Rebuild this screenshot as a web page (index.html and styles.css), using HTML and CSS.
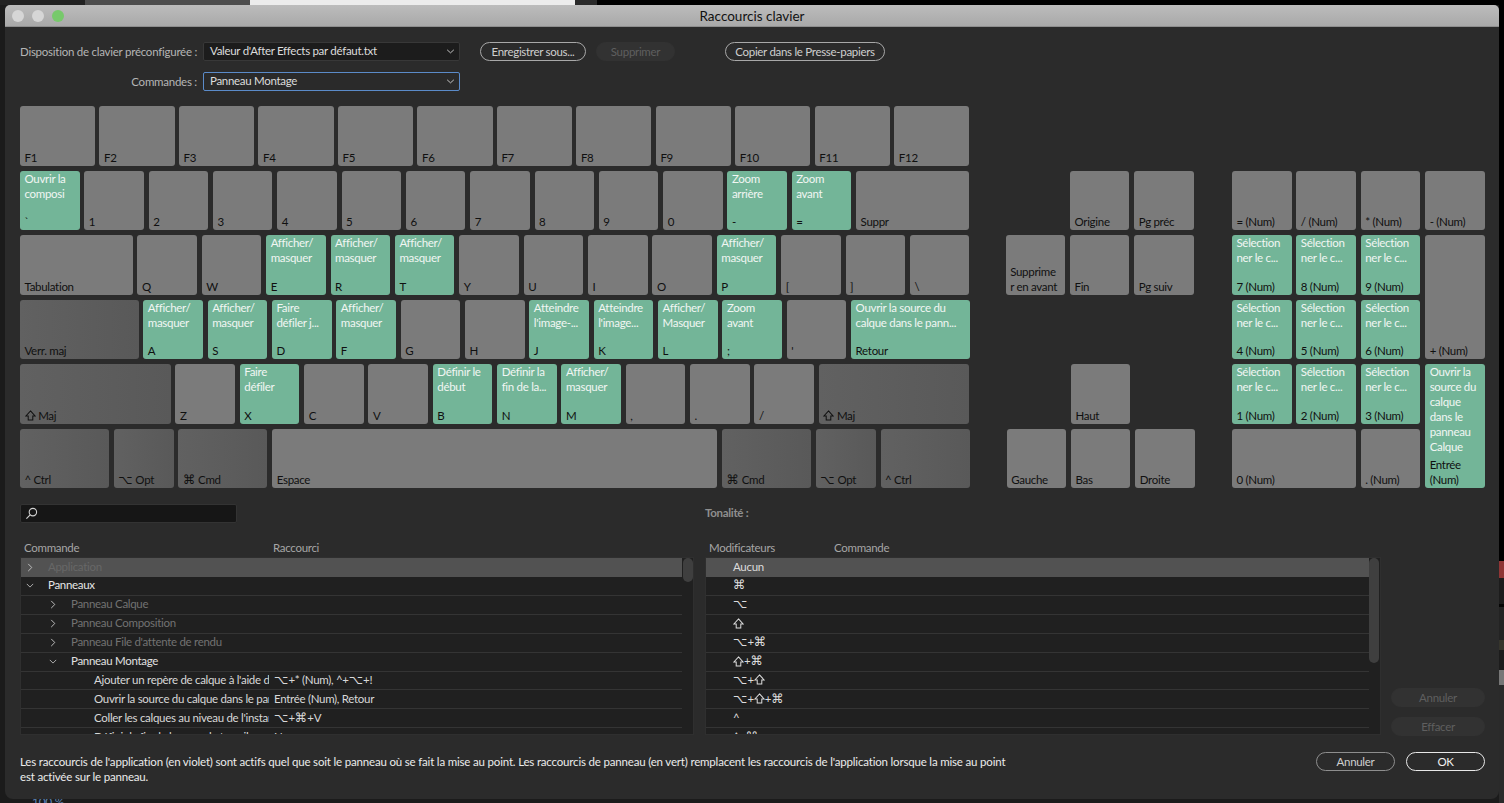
FILE: index.html
```html
<!DOCTYPE html>
<html lang="fr">
<head>
    <meta charset="UTF-8">
    <meta name="viewport" content="width=device-width, initial-scale=1.0">
    <title>Raccourcis clavier</title>
    <link rel="stylesheet" href="styles.css">
</head>
<body>
    <!-- What shows around the dialog -->
    <div class="backdrop">
        <div class="bg-top"></div>
        <div class="bg-right"></div>
        <div class="bg-percent">100 %</div>
    </div>

    <div class="dialog">
        <div class="titlebar">
            <div class="lights">
                <span class="light"></span>
                <span class="light"></span>
                <span class="light green"></span>
            </div>
            <div class="title">Raccourcis clavier</div>
        </div>

        <!-- Presets -->
        <div class="form">
            <div class="form-row">
                <label class="form-label">Disposition de clavier préconfigurée :</label>
                <div class="select">Valeur d'After Effects par défaut.txt
                    <svg class="chevron" viewBox="0 0 10 6"><path d="M1 1l4 3.6L9 1"/></svg>
                </div>
                <button class="btn btn-save">Enregistrer sous...</button>
                <button class="btn btn-off btn-delete">Supprimer</button>
                <button class="btn btn-copy">Copier dans le Presse-papiers</button>
            </div>
            <div class="form-row">
                <label class="form-label">Commandes :</label>
                <div class="select focus">Panneau Montage
                    <svg class="chevron" viewBox="0 0 10 6"><path d="M1 1l4 3.6L9 1"/></svg>
                </div>
            </div>
        </div>

        <!-- Keyboard -->
        <div class="keyboard">
            <div class="main-keys">
                <div class="key-row fn-row">
                    <div class="key"><span></span><span>F1</span></div>
                    <div class="key"><span></span><span>F2</span></div>
                    <div class="key"><span></span><span>F3</span></div>
                    <div class="key"><span></span><span>F4</span></div>
                    <div class="key"><span></span><span>F5</span></div>
                    <div class="key"><span></span><span>F6</span></div>
                    <div class="key"><span></span><span>F7</span></div>
                    <div class="key"><span></span><span>F8</span></div>
                    <div class="key"><span></span><span>F9</span></div>
                    <div class="key"><span></span><span>F10</span></div>
                    <div class="key"><span></span><span>F11</span></div>
                    <div class="key"><span></span><span>F12</span></div>
                </div>
                <div class="key-row">
                    <div class="key on"><span>Ouvrir la<br>composi</span><span>`</span></div>
                    <div class="key"><span></span><span>1</span></div>
                    <div class="key"><span></span><span>2</span></div>
                    <div class="key"><span></span><span>3</span></div>
                    <div class="key"><span></span><span>4</span></div>
                    <div class="key"><span></span><span>5</span></div>
                    <div class="key"><span></span><span>6</span></div>
                    <div class="key"><span></span><span>7</span></div>
                    <div class="key"><span></span><span>8</span></div>
                    <div class="key"><span></span><span>9</span></div>
                    <div class="key"><span></span><span>0</span></div>
                    <div class="key on"><span>Zoom<br>arrière</span><span>-</span></div>
                    <div class="key on"><span>Zoom<br>avant</span><span>=</span></div>
                    <div class="key w-suppr"><span></span><span>Suppr</span></div>
                </div>
                <div class="key-row">
                    <div class="key w-tab"><span></span><span>Tabulation</span></div>
                    <div class="key"><span></span><span>Q</span></div>
                    <div class="key"><span></span><span>W</span></div>
                    <div class="key on"><span>Afficher/<br>masquer</span><span>E</span></div>
                    <div class="key on"><span>Afficher/<br>masquer</span><span>R</span></div>
                    <div class="key on"><span>Afficher/<br>masquer</span><span>T</span></div>
                    <div class="key"><span></span><span>Y</span></div>
                    <div class="key"><span></span><span>U</span></div>
                    <div class="key"><span></span><span>I</span></div>
                    <div class="key"><span></span><span>O</span></div>
                    <div class="key on"><span>Afficher/<br>masquer</span><span>P</span></div>
                    <div class="key"><span></span><span>[</span></div>
                    <div class="key"><span></span><span>]</span></div>
                    <div class="key"><span></span><span>\</span></div>
                </div>
                <div class="key-row">
                    <div class="key mod w-caps"><span></span><span>Verr. maj</span></div>
                    <div class="key on"><span>Afficher/<br>masquer</span><span>A</span></div>
                    <div class="key on"><span>Afficher/<br>masquer</span><span>S</span></div>
                    <div class="key on"><span>Faire<br>défiler j...</span><span>D</span></div>
                    <div class="key on"><span>Afficher/<br>masquer</span><span>F</span></div>
                    <div class="key"><span></span><span>G</span></div>
                    <div class="key"><span></span><span>H</span></div>
                    <div class="key on"><span>Atteindre<br>l'image-...</span><span>J</span></div>
                    <div class="key on"><span>Atteindre<br>l'image...</span><span>K</span></div>
                    <div class="key on"><span>Afficher/<br>Masquer</span><span>L</span></div>
                    <div class="key on"><span>Zoom<br>avant</span><span>;</span></div>
                    <div class="key"><span></span><span>'</span></div>
                    <div class="key on w-caps"><span>Ouvrir la source du<br>calque dans le pann...</span><span>Retour</span></div>
                </div>
                <div class="key-row">
                    <div class="key mod w-shift"><span></span><span><svg class="shift" viewBox="0 0 12 12"><path d="M6 1l5 5.500H8.500V11h-5V6.500H1z"/></svg> Maj</span></div>
                    <div class="key"><span></span><span>Z</span></div>
                    <div class="key on"><span>Faire<br>défiler</span><span>X</span></div>
                    <div class="key"><span></span><span>C</span></div>
                    <div class="key"><span></span><span>V</span></div>
                    <div class="key on"><span>Définir le<br>début</span><span>B</span></div>
                    <div class="key on"><span>Définir la<br>fin de la...</span><span>N</span></div>
                    <div class="key on"><span>Afficher/<br>masquer</span><span>M</span></div>
                    <div class="key"><span></span><span>,</span></div>
                    <div class="key"><span></span><span>.</span></div>
                    <div class="key"><span></span><span>/</span></div>
                    <div class="key mod w-shift"><span></span><span><svg class="shift" viewBox="0 0 12 12"><path d="M6 1l5 5.500H8.500V11h-5V6.500H1z"/></svg> Maj</span></div>
                </div>
                <div class="key-row">
                    <div class="key mod w-ctrl"><span></span><span>^ Ctrl</span></div>
                    <div class="key mod"><span></span><span><i class="sym">⌥</i> Opt</span></div>
                    <div class="key mod w-ctrl"><span></span><span><i class="sym">⌘</i> Cmd</span></div>
                    <div class="key w-space"><span></span><span>Espace</span></div>
                    <div class="key mod w-ctrl"><span></span><span><i class="sym">⌘</i> Cmd</span></div>
                    <div class="key mod"><span></span><span><i class="sym">⌥</i> Opt</span></div>
                    <div class="key mod w-ctrl"><span></span><span>^ Ctrl</span></div>
                </div>
            </div>

            <div class="nav-keys">
                <div class="key col-2"><span></span><span>Origine</span></div>
                <div class="key"><span></span><span>Pg préc</span></div>
                <div class="key"><span></span><span>Supprime<br>r en avant</span></div>
                <div class="key"><span></span><span>Fin</span></div>
                <div class="key"><span></span><span>Pg suiv</span></div>
                <div class="key arrow arrow-up"><span></span><span>Haut</span></div>
                <div class="key arrow arrow-low"><span></span><span>Gauche</span></div>
                <div class="key arrow arrow-low"><span></span><span>Bas</span></div>
                <div class="key arrow arrow-low"><span></span><span>Droite</span></div>
            </div>

            <div class="num-keys">
                <div class="key"><span></span><span>= (Num)</span></div>
                <div class="key"><span></span><span>/ (Num)</span></div>
                <div class="key"><span></span><span>* (Num)</span></div>
                <div class="key"><span></span><span>- (Num)</span></div>
                <div class="key on"><span>Sélection<br>ner le c...</span><span>7 (Num)</span></div>
                <div class="key on"><span>Sélection<br>ner le c...</span><span>8 (Num)</span></div>
                <div class="key on"><span>Sélection<br>ner le c...</span><span>9 (Num)</span></div>
                <div class="key tall"><span></span><span>+ (Num)</span></div>
                <div class="key on"><span>Sélection<br>ner le c...</span><span>4 (Num)</span></div>
                <div class="key on"><span>Sélection<br>ner le c...</span><span>5 (Num)</span></div>
                <div class="key on"><span>Sélection<br>ner le c...</span><span>6 (Num)</span></div>
                <div class="key on"><span>Sélection<br>ner le c...</span><span>1 (Num)</span></div>
                <div class="key on"><span>Sélection<br>ner le c...</span><span>2 (Num)</span></div>
                <div class="key on"><span>Sélection<br>ner le c...</span><span>3 (Num)</span></div>
                <div class="key on tall"><span>Ouvrir la<br>source du<br>calque<br>dans le<br>panneau<br>Calque</span><span>Entrée<br>(Num)</span></div>
                <div class="key wide"><span></span><span>0 (Num)</span></div>
                <div class="key"><span></span><span>. (Num)</span></div>
            </div>
        </div>

        <!-- Lists -->
        <div class="lower">
            <div class="pane pane-left">
                <div class="pane-top">
                    <div class="search">
                        <svg class="search-icon" viewBox="0 0 14 14"><circle cx="8.5" cy="5.5" r="4"/><path d="M5.600 8.400L1.500 12.500"/></svg>
                    </div>
                </div>
                <div class="list-head">
                    <div class="head-cell head-command">Commande</div>
                    <div class="head-cell">Raccourci</div>
                </div>
                <div class="list">
                    <div class="thumb thumb-left"></div>
                    <div class="row selected">
                        <div class="cell-name lvl-0 dim"><svg class="twisty" viewBox="0 0 8 10"><path d="M2 1l4 4-4 4"/></svg>Application</div>
                    </div>
                    <div class="row">
                        <div class="cell-name lvl-0"><svg class="twisty" viewBox="0 0 10 8"><path d="M1 2l4 4 4-4"/></svg>Panneaux</div>
                    </div>
                    <div class="row">
                        <div class="cell-name lvl-1 grey"><svg class="twisty" viewBox="0 0 8 10"><path d="M2 1l4 4-4 4"/></svg>Panneau Calque</div>
                    </div>
                    <div class="row">
                        <div class="cell-name lvl-1 grey"><svg class="twisty" viewBox="0 0 8 10"><path d="M2 1l4 4-4 4"/></svg>Panneau Composition</div>
                    </div>
                    <div class="row">
                        <div class="cell-name lvl-1 grey"><svg class="twisty" viewBox="0 0 8 10"><path d="M2 1l4 4-4 4"/></svg>Panneau File d'attente de rendu</div>
                    </div>
                    <div class="row">
                        <div class="cell-name lvl-1"><svg class="twisty" viewBox="0 0 10 8"><path d="M1 2l4 4 4-4"/></svg>Panneau Montage</div>
                    </div>
                    <div class="row">
                        <div class="cell-name lvl-2">Ajouter un repère de calque à l'aide de la touche</div>
                        <div class="cell-keys"><i class="sym">⌥</i>+* (Num), ^+<i class="sym">⌥</i>+!</div>
                    </div>
                    <div class="row">
                        <div class="cell-name lvl-2">Ouvrir la source du calque dans le panneau Calque</div>
                        <div class="cell-keys">Entrée (Num), Retour</div>
                    </div>
                    <div class="row">
                        <div class="cell-name lvl-2">Coller les calques au niveau de l'instant courant</div>
                        <div class="cell-keys"><i class="sym">⌥</i>+<i class="sym">⌘</i>+V</div>
                    </div>
                    <div class="row">
                        <div class="cell-name lvl-2">Définir la fin de la zone de travail</div>
                        <div class="cell-keys">N</div>
                    </div>
                </div>
            </div>

            <div class="pane pane-right">
                <div class="pane-top">
                    <div class="tone">Tonalité :</div>
                </div>
                <div class="list-head">
                    <div class="head-cell head-mod">Modificateurs</div>
                    <div class="head-cell">Commande</div>
                </div>
                <div class="list">
                    <div class="thumb thumb-right"></div>
                    <div class="row selected"><div class="cell-mod">Aucun</div></div>
                    <div class="row"><div class="cell-mod"><i class="sym">⌘</i></div></div>
                    <div class="row"><div class="cell-mod"><i class="sym">⌥</i></div></div>
                    <div class="row"><div class="cell-mod"><svg class="shift" viewBox="0 0 12 12"><path d="M6 1l5 5.500H8.500V11h-5V6.500H1z"/></svg></div></div>
                    <div class="row"><div class="cell-mod"><i class="sym">⌥</i>+<i class="sym">⌘</i></div></div>
                    <div class="row"><div class="cell-mod"><svg class="shift" viewBox="0 0 12 12"><path d="M6 1l5 5.500H8.500V11h-5V6.500H1z"/></svg>+<i class="sym">⌘</i></div></div>
                    <div class="row"><div class="cell-mod"><i class="sym">⌥</i>+<svg class="shift" viewBox="0 0 12 12"><path d="M6 1l5 5.500H8.500V11h-5V6.500H1z"/></svg></div></div>
                    <div class="row"><div class="cell-mod"><i class="sym">⌥</i>+<svg class="shift" viewBox="0 0 12 12"><path d="M6 1l5 5.500H8.500V11h-5V6.500H1z"/></svg>+<i class="sym">⌘</i></div></div>
                    <div class="row"><div class="cell-mod">^</div></div>
                    <div class="row"><div class="cell-mod">^+<i class="sym">⌘</i></div></div>
                </div>
            </div>

            <div class="side-buttons">
                <button class="btn btn-off btn-side">Annuler</button>
                <button class="btn btn-off btn-side">Effacer</button>
            </div>
        </div>

        <!-- Footer -->
        <div class="footer">
            <p class="note">Les raccourcis de l'application (en violet) sont actifs quel que soit le panneau où se fait la mise au point. Les raccourcis de panneau (en vert) remplacent les raccourcis de l'application lorsque la mise au point<br>est activée sur le panneau.</p>
            <div class="footer-buttons">
                <button class="btn btn-cancel">Annuler</button>
                <button class="btn btn-ok">OK</button>
            </div>
        </div>
    </div>
</body>
</html>
```

FILE: styles.css
```css
* {
    box-sizing: border-box;
}
html, body {
    margin: 0;
    height: 100%;
}
body {
    position: relative;
    overflow: hidden;
    background-color: #1b1b1b;
    font-family: "Lato", "DejaVu Sans", sans-serif;
    font-size: 11.5px;
    letter-spacing: -0.3px;
    color: #d8d8d8;
}

/* behind the dialog */
.bg-top {
    position: absolute;
    left: 0;
    top: 0;
    width: 100%;
    height: 5px;
    background: linear-gradient(to right, #222 0, #222 85px, #4d4d4d 85px, #4d4d4d 250px, #ececec 250px, #ececec 575px, #2a2a2a 575px, #2a2a2a 597px, #000 597px);
}
.bg-right {
    position: absolute;
    right: 0;
    top: 5px;
    width: 5px;
    height: 798px;
    background: linear-gradient(to bottom, #000 0, #000 556px, #8f3535 556px, #8f3535 573px, #1c1c1c 573px, #1c1c1c 599px, #050505 599px, #050505 602px, #232323 602px, #232323 635px, #36352c 635px, #36352c 645px, #1c1c1c 645px, #1c1c1c 665px, #777 665px, #777 680px, #2a2a2a 680px);
}
.bg-percent {
    position: absolute;
    left: 32px;
    top: 794px;
    font-size: 12px;
    color: #5d86b8;
}

/* dialog */
.dialog {
    position: absolute;
    left: 5px;
    top: 5px;
    width: 1494px;
    height: 794px;
    padding-left: 15px;
    background-color: #2b2b2b;
    border-radius: 5px 5px 8px 8px;
    overflow: hidden;
}
.titlebar {
    position: relative;
    margin-left: -15px;
    height: 22px;
    background: linear-gradient(to bottom, #bcbcbc, #a9a9a9);
    border-bottom: 1px solid #8e8e8e;
    display: flex;
    align-items: center;
    justify-content: center;
}
.lights {
    position: absolute;
    left: 7px;
    top: 5px;
    display: flex;
    gap: 8px;
}
.light {
    width: 12px;
    height: 12px;
    border-radius: 50%;
    background-color: #d6d6d6;
}
.light.green {
    background-color: #77c96b;
}
.title {
    font-size: 13.5px;
    letter-spacing: 0;
    color: #111;
}

/* presets */
.form {
    padding-top: 15px;
    display: flex;
    flex-direction: column;
    gap: 11px;
}
.form-row {
    display: flex;
    align-items: center;
    height: 19px;
}
.form-label {
    width: 177px;
    margin-right: 6px;
    text-align: right;
    letter-spacing: -0.25px;
    color: #b5b5b5;
    white-space: nowrap;
}
.select {
    position: relative;
    width: 257px;
    height: 19px;
    line-height: 16px;
    padding-left: 6px;
    background-color: #1c1c1c;
    border: 1px solid #383838;
    border-radius: 2px;
    color: #dcdcdc;
}
.select.focus {
    background-color: #2a2a2a;
    border-color: #5b8bc9;
}
.chevron {
    position: absolute;
    right: 4px;
    top: 6px;
    width: 9px;
    height: 5px;
    fill: none;
    stroke: #cfcfcf;
    stroke-width: 1.1;
}
.btn {
    height: 19px;
    padding: 0;
    background: transparent;
    border: 1.5px solid #a8a8a8;
    border-radius: 10px;
    font-family: inherit;
    font-size: 11.5px;
    letter-spacing: inherit;
    color: #cfcfcf;
}
.btn-off {
    background-color: #323232;
    border-color: #323232;
    color: #5f5f5f;
}
.btn-save {
    width: 106px;
    margin-left: 20px;
}
.btn-delete {
    width: 79px;
    margin-left: 10px;
}
.btn-copy {
    width: 160px;
    margin-left: 50px;
}

/* keyboard */
.keyboard {
    margin-top: 15.4px;
    display: flex;
}
.main-keys {
    width: 949.5px;
    display: flex;
    flex-direction: column;
    gap: 4.85px;
}
.key-row {
    height: 59.6px;
    display: flex;
    gap: 4.8px;
}
.fn-row {
    gap: 4.4px;
}
.key {
    flex: 1 1 0;
    min-width: 0;
    overflow: hidden;
    display: flex;
    flex-direction: column;
    justify-content: space-between;
    padding: 0 5px 1px 4.5px;
    background-color: #7b7b7b;
    border-radius: 3px;
    line-height: 15px;
    white-space: nowrap;
    color: #101010;
}
.key.on {
    background-color: #73b598;
}
.key.on span:first-child {
    color: #f1f6f3;
}
.key.mod {
    background: linear-gradient(to right, #616161, #595959);
}
.sym {
    font-family: "DejaVu Sans", sans-serif;
    font-style: normal;
    font-size: 12.5px;
    letter-spacing: 0;
}
.shift {
    display: inline-block;
    width: 11px;
    height: 11px;
    vertical-align: -1.5px;
    fill: none;
    stroke: currentColor;
    stroke-width: 1.1;
}
.w-suppr {
    flex: 0 0 113.4px;
}
.w-tab {
    flex: 0 0 112.6px;
}
.w-caps {
    flex: 0 0 118.5px;
}
.w-shift {
    flex: 0 0 150.7px;
}
.w-ctrl {
    flex: 0 0 89px;
}
.w-space {
    flex: 0 0 445px;
}
.nav-keys, .num-keys {
    margin-top: 64.45px;
    display: grid;
    grid-template-columns: repeat(3, 59.5px);
    grid-template-rows: repeat(5, 59.6px);
    gap: 4.85px 4.8px;
}
.nav-keys {
    margin-left: 36.2px;
}
.col-2 {
    grid-column: 2;
}
.arrow {
    margin: 0 -1px 0 1px;
}
.arrow-up {
    grid-column: 2;
    grid-row: 4;
}
.arrow-low {
    grid-row: 5;
}
.num-keys {
    margin-left: 38.2px;
    grid-template-columns: repeat(4, 59.6px);
}
.tall {
    grid-row: span 2;
}
.wide {
    grid-column: span 2;
}

/* lists */
.lower {
    margin-top: 15.6px;
    display: flex;
}
.pane-left {
    width: 674px;
}
.pane-right {
    width: 676px;
    margin-left: 11px;
}
.pane-top {
    height: 19px;
    display: flex;
    align-items: center;
}
.search {
    width: 217px;
    height: 19px;
    padding: 2px 0 0 4px;
    background-color: #161616;
    border: 1px solid #333;
    border-radius: 2px;
}
.search-icon {
    display: block;
    width: 13px;
    height: 13px;
    fill: none;
    stroke: #d0d0d0;
    stroke-width: 1.2;
}
.tone {
    padding-bottom: 2px;
    font-weight: 700;
    color: #8f8f8f;
}
.list-head {
    margin-top: 15.4px;
    height: 19px;
    display: flex;
    align-items: center;
    color: #a6a6a6;
}
.head-cell {
    padding-left: 4px;
}
.head-command {
    width: 249px;
}
.head-mod {
    width: 125px;
}
.list {
    position: relative;
    height: 178px;
    overflow: hidden;
    background-color: #202020;
    border: 1px solid #2f2f2f;
}
.row {
    height: 18.9px;
    display: flex;
    align-items: center;
    margin-right: 11px;
    padding-bottom: 2px;
    border-bottom: 1px solid #343434;
    white-space: nowrap;
}
.row.selected {
    background-color: #525252;
    border-bottom-color: #525252;
}
.cell-name {
    position: relative;
    flex: 0 0 248px;
    overflow: hidden;
    color: #d8d8d8;
}
.lvl-0 {
    padding-left: 27px;
    color: #e6e6e6;
}
.lvl-1 {
    padding-left: 50px;
    color: #e0e0e0;
}
.lvl-2 {
    padding-left: 73px;
}
.cell-name.dim {
    color: #676767;
}
.cell-name.grey {
    color: #727272;
}
.twisty {
    position: absolute;
    top: 3px;
    width: 8px;
    height: 9px;
    fill: none;
    stroke: #bdbdbd;
    stroke-width: 1.1;
}
.lvl-0 .twisty {
    left: 5px;
}
.lvl-1 .twisty {
    left: 28px;
}
.cell-keys {
    padding-left: 5px;
    color: #d8d8d8;
}
.cell-mod {
    padding-left: 27px;
    color: #dcdcdc;
}
.thumb {
    position: absolute;
    top: 0;
    width: 10px;
    background-color: #3f3f3f;
    border-radius: 5px;
}
.thumb-left {
    right: 0;
    height: 24px;
}
.thumb-right {
    right: 1px;
    height: 105px;
}
.side-buttons {
    margin-left: 10px;
    padding-top: 184px;
    display: flex;
    flex-direction: column;
    gap: 10px;
}
.btn-side {
    width: 94px;
}

/* footer */
.footer {
    margin-top: 16px;
    display: flex;
    justify-content: space-between;
    padding-right: 14px;
}
.note {
    margin: 0;
    padding-top: 2.5px;
    line-height: 15px;
    white-space: nowrap;
    letter-spacing: -0.18px;
    color: #ececec;
}
.footer-buttons {
    display: flex;
    gap: 11px;
}
.btn-cancel {
    width: 79px;
    border-color: #8e8e8e;
}
.btn-ok {
    width: 79px;
    border-color: #e8e8e8;
    color: #f2f2f2;
}
```
